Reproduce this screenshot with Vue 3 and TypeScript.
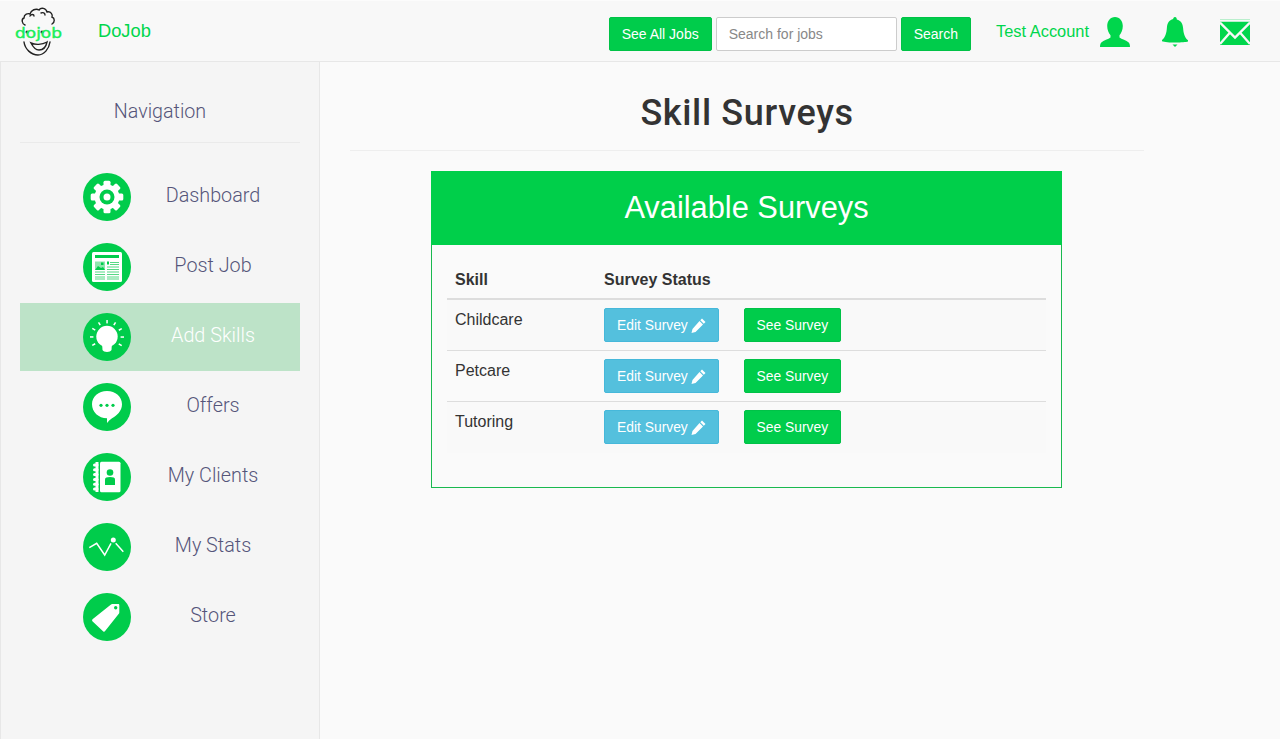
<script setup lang="ts">
const surveys: string[] = ['Childcare', 'Petcare', 'Tutoring']
const navItems: { label: string; icon: string; active?: boolean }[] = [
  { label: 'Dashboard', icon: 'gear' },
  { label: 'Post Job', icon: 'news' },
  { label: 'Add Skills', icon: 'bulb', active: true },
  { label: 'Offers', icon: 'chat' },
  { label: 'My Clients', icon: 'book' },
  { label: 'My Stats', icon: 'stats' },
  { label: 'Store', icon: 'tag' },
]
const angles: number[] = [0, 45, 90, 135, 180, 225, 270, 315]
const rays: number[] = [-120, -90, -60, -30, 0, 30, -150, -180, 150]
const rings: number[] = [10.5, 15.3, 20.1, 24.9, 29.7, 34.5]
</script>

<template>
  <div class="page">
    <header class="topbar">
      <div class="brand">
        <svg class="logo" width="50" height="52" viewBox="0 2 50 52">
          <g fill="none" stroke="#222" stroke-width="1.4" stroke-linecap="round">
            <path d="M12 21c-3-1-4-6-1-7 0-4 4-5 6-4 1-4 6-6 9-4 2-3 7-2 8 2 4-1 6 3 5 5 3 1 3 5 0 7" />
            <path d="M17 12c1-2 4-2 4 0M28 9c2-1 4 0 4 2" />
            <path d="M11 38c1 7 7 13 14 13 6 0 11-6 12-13" />
            <path d="M18 39c4 2 11 2 16-1-1 5-4 8-8 8-4 0-6-3-8-7z" />
          </g>
          <circle cx="14" cy="28" r="1.5" fill="#222" />
          <circle cx="29" cy="28" r="1.5" fill="#222" />
          <text class="logo-text" x="2" y="34" textLength="47" lengthAdjust="spacingAndGlyphs">dojob</text>
        </svg>
        <span class="brand-name">DoJob</span>
      </div>
      <div class="tools">
        <div class="search">
          <button class="btn btn-green" type="button">See All Jobs</button>
          <input class="search-input" type="text" placeholder="Search for jobs" />
          <button class="btn btn-green" type="button">Search</button>
        </div>
        <span class="account">Test Account</span>
        <svg class="top-icon user" width="30" height="30" viewBox="0 0 30 30">
          <path fill="#00d64c" d="M15 0c4.800 0 7.800 4 7.800 9 0 4-1.500 7-3.300 9.200v2.300c2 1.500 7 3 9.200 5 .8.800 1.300 2.500 1.300 4.500H0c0-2 .5-3.700 1.300-4.500 2.200-2 7.200-3.500 9.200-5v-2.300C8.700 16 7.200 13 7.200 9 7.200 4 10.200 0 15 0z" />
        </svg>
        <svg class="top-icon bell" width="26" height="30" viewBox="0 0 26 30">
          <path fill="#00d64c" d="M13 0c1.300 0 1.800 1 1.800 2.400 4.200 1 6 4.200 6.300 8.600.3 5 1.500 9.500 4.900 12.300v1.300C22 26 4 26 0 24.300V23c3.400-2.800 4.600-7.300 4.900-12.300.3-4.400 2.100-7.600 6.300-8.600C11.200 1 11.700 0 13 0z" />
          <path fill="#00d64c" d="M10.500 27.500h5L13 30z" />
        </svg>
        <svg class="top-icon mail" width="30" height="26" viewBox="0 0 30 26">
          <rect y="0" width="30" height="26" fill="#00d64c" />
          <path d="M0 1.500h30M0 3.500l15 15 15-15M0 25l10.500-12M30 25L19.500 13" fill="none" stroke="#f8f8f8" stroke-width="2.300" />
        </svg>
      </div>
    </header>

    <div class="body">
      <aside class="sidebar">
        <h2 class="nav-title">Navigation</h2>
        <nav class="nav">
          <a v-for="item in navItems" :key="item.label" class="nav-item" :class="{ active: item.active }">
            <svg class="nav-icon" width="48" height="48" viewBox="0 0 48 48">
              <circle cx="24" cy="24" r="24" fill="#00cc4b" />
              <g v-if="item.icon === 'gear'">
                <rect v-for="a in angles" :key="a" x="20.500" y="7.700" width="7" height="8" rx="1.500" fill="#fff" :transform="`rotate(${a} 24 24)`" />
                <circle cx="24" cy="24" r="12.500" fill="#fff" />
                <circle cx="24" cy="24" r="7.500" fill="#00cc4b" />
                <circle cx="24" cy="24" r="3.500" fill="#fff" />
              </g>
              <g v-else-if="item.icon === 'news'">
                <rect x="9" y="9" width="30" height="30" rx="1.500" fill="#fff" />
                <rect x="12" y="12" width="24" height="3" fill="#00cc4b" />
                <rect x="12" y="18.500" width="10" height="8.500" fill="#8fe6ae" />
                <path d="M12 27l3-4 3 2 2-1 2 3z" fill="#00cc4b" />
                <rect x="18" y="19.500" width="2.500" height="2.500" fill="#00cc4b" />
                <path d="M12 29h10M12 31.500h10M12 34h10M12 36h10" stroke="#55d985" stroke-width="1" />
                <rect x="24" y="18.500" width="2" height="3" fill="#00cc4b" />
                <path d="M27 19.500h9M27 21.500h9M24 24h12M24 26.500h12M24 29h12M24 31.500h12M24 34h12M24 36h12" stroke="#55d985" stroke-width="1" />
              </g>
              <g v-else-if="item.icon === 'bulb'">
                <circle cx="24" cy="23.500" r="10.700" fill="#fff" />
                <path d="M19 30h10l-.5 7c-1 2.500-8 2.500-9 0z" fill="#fff" />
                <rect v-for="r in rays" :key="r" x="23.300" y="7" width="1.500" height="3.400" fill="#fff" :transform="`rotate(${r + 90} 24 24)`" />
              </g>
              <g v-else-if="item.icon === 'chat'">
                <path d="M24 8c8.500 0 15 5.700 15 13.300 0 7-5.500 11.500-10 14-1.500 1-3.700 3-5 4.700v-4.700C15.500 35.300 9 29 9 21.300 9 13.700 15.500 8 24 8z" fill="#fff" />
                <circle cx="18" cy="22.300" r="1.600" fill="#00cc4b" />
                <circle cx="24" cy="22.300" r="1.600" fill="#00cc4b" />
                <circle cx="30" cy="22.300" r="1.600" fill="#00cc4b" />
              </g>
              <g v-else-if="item.icon === 'book'">
                <rect x="17" y="8.700" width="20.500" height="30.600" rx="1.500" fill="#fff" />
                <rect x="12.500" y="9" width="3" height="30" fill="#fff" />
                <rect v-for="y in rings" :key="y" x="10" :y="y" width="5.500" height="3" rx="1.500" fill="#fff" />
                <circle cx="27" cy="19.500" r="3.300" fill="#00cc4b" />
                <path d="M22 32v-5.500c0-1.800 1.800-2.500 5-2.500s5 .7 5 2.500V32z" fill="#00cc4b" />
              </g>
              <g v-else-if="item.icon === 'stats'">
                <path d="M6.300 24.700l7.400-4.400 8 11.700 6.300-11.700M32.700 20.300l7.600 8.400" fill="none" stroke="#fff" stroke-width="1.500" />
                <circle cx="30.300" cy="17" r="2.500" fill="#fff" />
              </g>
              <g v-else>
                <path fill-rule="evenodd" d="M9.500 26.200L28 11.500q.5-.5 1.200-.5h6c.7 0 1.100.5 1.100 1.100v7.400q0 .8-.5 1.300L21.900 38.300q-.7.800-1.600.1L9.400 28.200q-.8-1.100.1-2zM32.700 13a1.700 1.700 0 1 0 0 3.400 1.700 1.700 0 0 0 0-3.400z" fill="#fff" />
              </g>
            </svg>
            <span class="nav-label">{{ item.label }}</span>
          </a>
        </nav>
      </aside>

      <main class="main">
        <div class="content">
          <h1 class="page-title">Skill Surveys</h1>
          <section class="panel">
            <h2 class="panel-title">Available Surveys</h2>
            <div class="panel-body">
              <table class="table">
                <thead>
                  <tr>
                    <th class="col-skill">Skill</th>
                    <th class="col-status">Survey Status</th>
                    <th></th>
                  </tr>
                </thead>
                <tbody>
                  <tr v-for="s in surveys" :key="s">
                    <td class="skill-cell">{{ s }}</td>
                    <td>
                      <button class="btn btn-blue btn-table" type="button">
                        Edit Survey
                        <svg class="pencil" width="15" height="15" viewBox="0 0 15 15">
                          <path fill="#fff" d="M11 .5l3.500 3.500-1.700 1.700-3.500-3.500zM8.500 3L12 6.500 4.500 14l-4 1 1-4z" />
                        </svg>
                      </button>
                    </td>
                    <td><button class="btn btn-green btn-table" type="button">See Survey</button></td>
                  </tr>
                </tbody>
              </table>
            </div>
          </section>
        </div>
      </main>
    </div>
  </div>
</template>

<style>
html, body { margin: 0; height: 100%; overflow: hidden; }
</style>

<style scoped>
.page {
  height: 739px;
  display: flex;
  flex-direction: column;
  font-family: "Liberation Sans", Arial, sans-serif;
  color: #333;
  background: #fafafa;
}
.topbar {
  box-sizing: border-box;
  height: 62px;
  flex: none;
  display: flex;
  align-items: center;
  justify-content: space-between;
  background: #f8f8f8;
  border-top: 1px solid #fcfcfc;
  border-bottom: 1px solid #e7e7e7;
}
.brand { display: flex; align-items: center; padding-left: 13px; }
.logo { display: block; margin-top: 2px; }
.logo-text {
  font-family: "DejaVu Sans", sans-serif;
  font-size: 13.500px;
  fill: #1aee5a;
  stroke: #1aee5a;
  stroke-width: .4;
}
.brand-name { margin-left: 35px; font-size: 18.300px; color: #00d64c; }
.tools { display: flex; align-items: center; padding-right: 30px; padding-top: 2px; }
.search { display: flex; gap: 4px; margin-top: 4px; }
.btn {
  box-sizing: border-box;
  height: 34px;
  padding: 0 12px;
  border: 1px solid #00c247;
  border-radius: 2px;
  font-family: inherit;
  font-size: 14px;
  color: #fff;
  white-space: nowrap;
}
.btn-table { font-size: 13.850px; }
.btn-green { background: #00cc4b; }
.btn-green.btn-table { padding: 0 11.500px; }
.btn-blue {
  display: inline-flex;
  align-items: center;
  gap: 3px;
  background: #54c0dd;
  border-color: #46b8da;
}
.search-input {
  box-sizing: border-box;
  width: 181px;
  height: 34px;
  padding: 0 12px;
  border: 1px solid #ccc;
  border-radius: 2px;
  background: #fff;
  font-family: inherit;
  font-size: 14px;
  outline: none;
}
.search-input::placeholder { color: #888; opacity: 1; }
.account { margin-left: 25px; font-size: 16.400px; color: #00d64c; margin-top: -2px; }
.top-icon { display: block; flex: none; }
.user { margin-left: 11px; }
.bell { margin-left: 32px; }
.mail { margin-left: 32px; }
.body { flex: 1; display: flex; min-height: 0; }
.sidebar {
  box-sizing: border-box;
  width: 320px;
  flex: none;
  padding: 0 19px;
  background: #f5f5f5;
  border-left: 1px solid #e7e7e7;
  border-right: 1px solid #e7e7e7;
}
.nav-title {
  height: 81px;
  box-sizing: border-box;
  margin: 0 0 20px;
  padding-top: 39px;
  border-bottom: 1px solid #eaeaea;
  font-size: 19.700px;
  font-weight: 300;
  line-height: 22px;
  text-align: center;
  font-family: Roboto, sans-serif;
  color: #55557a;
}
.nav { display: flex; flex-direction: column; gap: 2px; }
.nav-item {
  height: 68px;
  display: flex;
  align-items: center;
  padding-left: 63px;
}
.nav-item.active { background: #bde3c8; }
.nav-icon { display: block; flex: none; }
.nav-label {
  width: 164px;
  padding-bottom: 4px;
  text-align: center;
  font-family: Roboto, sans-serif;
  font-size: 19.800px;
  font-weight: 300;
  color: #55557a;
}
.active .nav-label { color: #fff; }
.main { flex: 1; min-width: 0; }
.content { width: 794px; margin-left: 30px; }
.page-title {
  box-sizing: border-box;
  height: 89px;
  margin: 0 0 20px;
  padding-top: 31px;
  border-bottom: 1px solid #eee;
  font-family: Roboto, sans-serif;
  font-size: 36px;
  letter-spacing: .65px;
  line-height: 40px;
  font-weight: 500;
  text-align: center;
  color: #333;
}
.panel {
  box-sizing: border-box;
  width: 631px;
  height: 317px;
  margin-left: 81px;
  border: 1px solid #19b94f;
}
.panel-title {
  height: 74px;
  margin: -1px -1px 0;
  background: #00cf4a;
  color: #fff;
  font-size: 30.800px;
  font-weight: 400;
  line-height: 74px;
  text-align: center;
}
.panel-body { padding: 15px 15px 0; }
.table { width: 599px; border-collapse: collapse; table-layout: fixed; }
th {
  height: 39px;
  padding: 2px 8px 0;
  box-sizing: border-box;
  font-size: 16px;
  font-weight: 700;
  text-align: left;
  border-bottom: 2px solid #ddd;
}
.col-skill { width: 149px; }
.col-status { width: 140px; }
td {
  height: 51px;
  box-sizing: border-box;
  padding: 8px;
  vertical-align: top;
  font-size: 16px;
  line-height: 22px;
  border-top: 1px solid #ddd;
}
td.skill-cell { padding-top: 9px; }
tbody tr:first-child td { border-top: 0; }
tbody tr:nth-child(odd) td { background: #f9f9f9; }
.pencil { display: block; }
</style>
